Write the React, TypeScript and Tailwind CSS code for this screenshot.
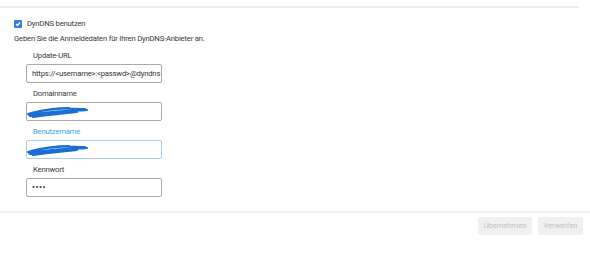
import React from "react";

function Scribble() {
  return (
    <svg width="62" height="12" viewBox="0 0 62 12" className="absolute left-0 top-1/2 -translate-y-1/2">
      <path d="M1 8 C10 5 20 4 30 3 C38 2 46 3 58 3 M2 9 C12 7 24 6 36 5 C44 4 52 5 60 4 M3 10 C14 9 26 8 40 6 M4 7 C16 4 28 2 42 2 M6 11 C18 9 30 8 50 6" stroke="#1a6fd6" strokeWidth="2" fill="none" strokeLinecap="round" />
    </svg>
  );
}

function Field({ label, value, active, redacted, password }: { label: string; value?: string; active?: boolean; redacted?: boolean; password?: boolean }) {
  return (
    <div className="flex flex-col">
      <div className={`pl-[7px] text-[7.7px] leading-[11px] tracking-[-0.2px] ${active ? "text-[#4a9be6]" : "text-[#3a3a3a]"}`}>{label}</div>
      <div className={`relative mt-[3px] flex h-[19px] w-[136px] items-center whitespace-nowrap rounded-[2px] border px-[5px] text-[7.7px] tracking-[-0.2px] text-[#333] ${active ? "border-[#a9cdec]" : "border-[#aaa]"}`}>
        {redacted && <Scribble />}
        {password ? <span className="tracking-[0.5px] text-[9px]">••••</span> : value}
      </div>
    </div>
  );
}

export default function App() {
  return (
    <div className="h-[274px] w-[590px] bg-white pt-[6px] font-['Roboto',sans-serif] text-[#3a3a3a]">
      <div className="h-[2px] w-[579px] bg-[#ececec]" />
      <div className="flex items-center gap-[5px] pl-[14px] pt-[10px]">
        <div className="flex h-[8px] w-[8px] items-center justify-center rounded-[1px] bg-[#2f7fd3]">
          <svg width="6" height="6" viewBox="0 0 6 6"><path d="M1 3 L2.5 4.5 L5 1.5" stroke="white" strokeWidth="1.2" fill="none" /></svg>
        </div>
        <span className="text-[7.7px] leading-[11px] tracking-[-0.2px]">DynDNS benutzen</span>
      </div>
      <div className="pl-[14px] pt-[4px] text-[7.7px] leading-[11px] tracking-[-0.2px]">Geben Sie die Anmeldedaten für Ihren DynDNS-Anbieter an.</div>
      <div className="flex flex-col gap-[5px] pl-[26px] pt-[6px]">
        <Field label="Update-URL" value="https://<username>:<passwd>@dyndns" />
        <Field label="Domainname" redacted />
        <Field label="Benutzername" redacted active />
        <Field label="Kennwort" password />
      </div>
      <div className="mt-[14px] h-[2px] w-full bg-[#f0f0f0]" />
      <div className="flex justify-end gap-[6px] pr-[7px] pt-[4px]">
        <div className="flex h-[18px] w-[54px] items-center justify-center rounded-[2px] bg-[#f0f0f0] text-[7.5px] text-[#c4c4c4]">Übernehmen</div>
        <div className="flex h-[18px] w-[45px] items-center justify-center rounded-[2px] bg-[#f0f0f0] text-[7.5px] text-[#c4c4c4]">Verwerfen</div>
      </div>
    </div>
  );
}
